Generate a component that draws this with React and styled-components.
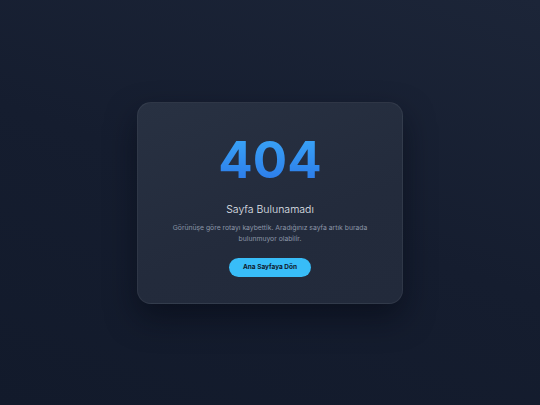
import React from 'react'
import styled, { createGlobalStyle } from 'styled-components'

const GlobalStyle = createGlobalStyle`
  html, body {
    margin: 0;
    padding: 0;
    height: 100%;
  }
  body {
    font-family: Inter, "Noto Sans", sans-serif;
    background: #131b2c;
  }
  #root {
    height: 100%;
  }
`

export default function App() {
  return (
    <>
      <GlobalStyle />
      <Page>
        <Card>
          <Code>404</Code>
          <Title>Sayfa Bulunamadı</Title>
          <Text>
            Görünüşe göre rotayı kaybettik. Aradığınız sayfa artık burada bulunmuyor olabilir.
          </Text>
          <HomeButton href="#">Ana Sayfaya Dön</HomeButton>
        </Card>
      </Page>
    </>
  )
}

const Page = styled.div`
  height: 405px;
  display: flex;
  align-items: center;
  justify-content: center;
  background: linear-gradient(200deg, #1c2538 0%, #151d2f 50%, #121a2b 100%);
`

const Card = styled.div`
  width: 266px;
  box-sizing: border-box;
  padding: 32px 22px 26px;
  border-radius: 14px;
  background: linear-gradient(160deg, #283142 0%, #232b3c 60%, #222a3b 100%);
  border: 1px solid rgba(255, 255, 255, 0.06);
  box-shadow: 0 14px 30px rgba(5, 9, 20, 0.55);
  display: flex;
  flex-direction: column;
  align-items: center;
  text-align: center;
`

const Code = styled.h1`
  margin: 0;
  font-size: 51px;
  line-height: 50px;
  font-weight: 700;
  background: linear-gradient(180deg, #3aa6f7 0%, #2b78e8 100%);
  -webkit-background-clip: text;
  background-clip: text;
  color: transparent;
`

const Title = styled.h2`
  margin: 18px 0 0;
  font-size: 10.5px;
  line-height: 13px;
  font-weight: 300;
  color: #e2e7ee;
`

const Text = styled.p`
  margin: 6px 0 0;
  font-size: 6.8px;
  line-height: 11px;
  color: #8b95a7;
`

const HomeButton = styled.a`
  margin-top: 14px;
  display: inline-flex;
  align-items: center;
  justify-content: center;
  width: 82px;
  height: 19px;
  border-radius: 10px;
  background: #38bdf8;
  color: #0f172a;
  font-size: 6.5px;
  font-weight: 700;
  text-decoration: none;
`
